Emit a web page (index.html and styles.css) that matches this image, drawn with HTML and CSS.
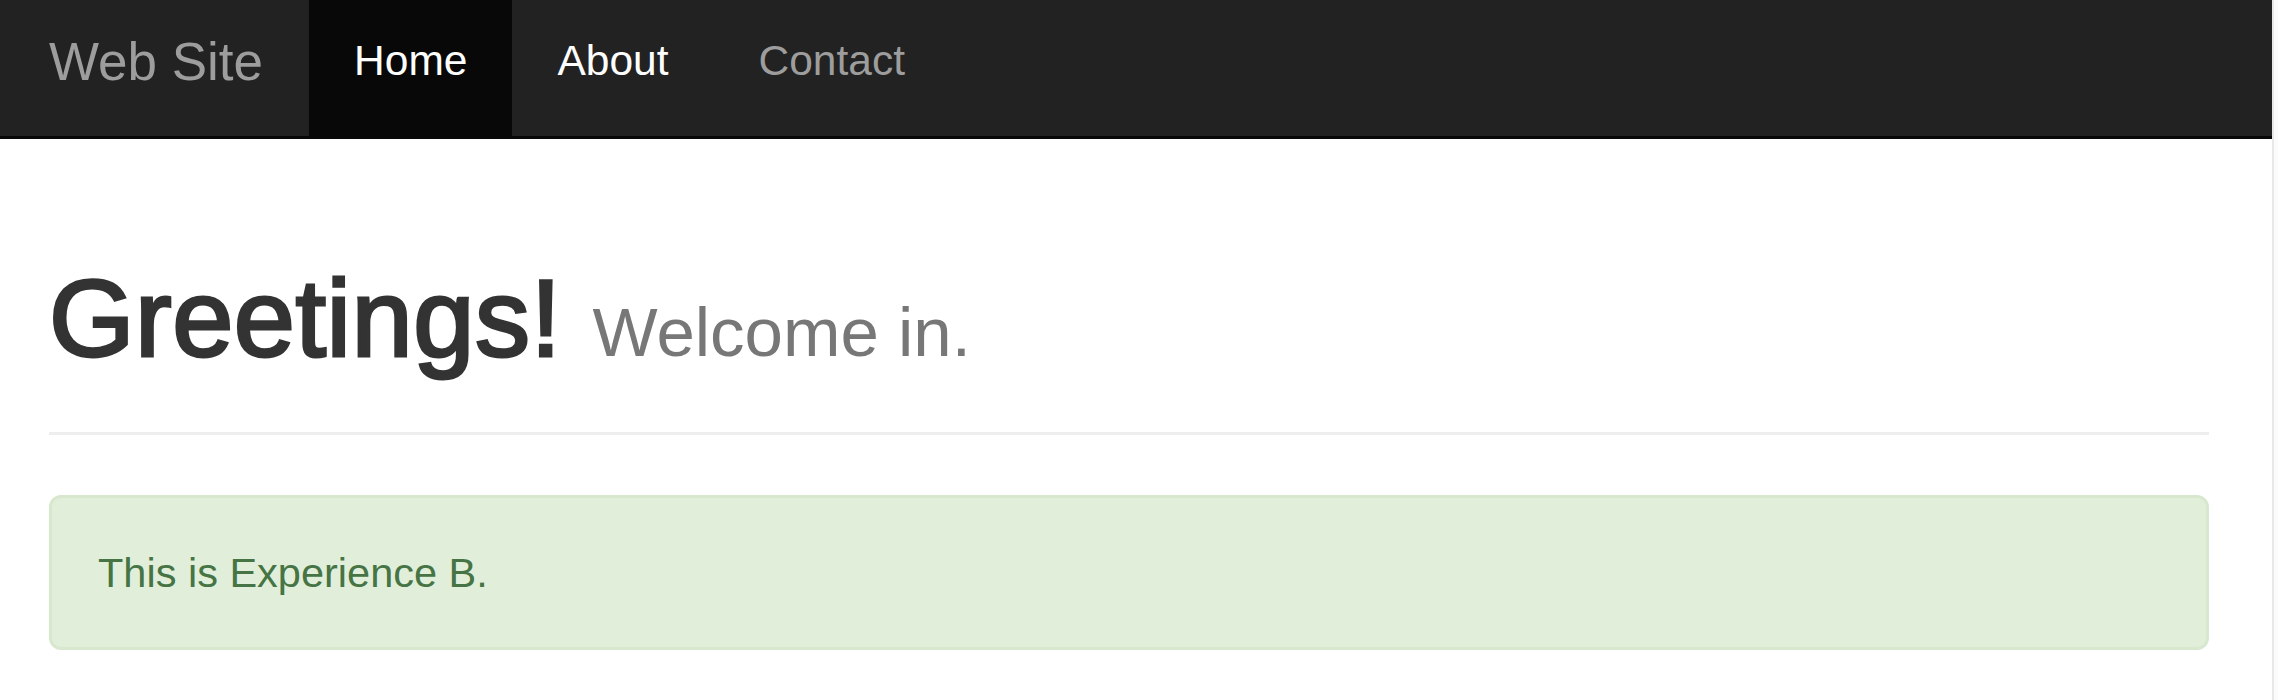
FILE: index.html
```html
<!DOCTYPE html>
<html lang="en">
<head>
<meta charset="utf-8">
<title>Web Site</title>
<link rel="stylesheet" href="styles.css">
</head>
<body>
  <div class="page">
    <nav class="navbar">
      <a class="brand" href="#">Web Site</a>
      <ul class="nav">
        <li class="nav-item active"><a href="#">Home</a></li>
        <li class="nav-item light"><a href="#">About</a></li>
        <li class="nav-item"><a href="#">Contact</a></li>
      </ul>
    </nav>
    <main class="content">
      <div class="page-header">
        <h1 class="title">Greetings! <small class="subtitle">Welcome in.</small></h1>
      </div>
      <div class="alert">This is Experience B.</div>
    </main>
  </div>
  <div class="scrollbar"></div>
</body>
</html>
```

FILE: styles.css
```css
html, body {
  margin: 0;
  padding: 0;
  background: #fff;
}

body {
  display: flex;
  min-height: 100vh;
  font-family: "Liberation Sans", Arial, Helvetica, sans-serif;
}

.page {
  flex: 1;
  min-width: 0;
}

.scrollbar {
  width: 4px;
  border-left: 2px solid #e8e8e8;
  background: #fbfbfb;
}

.navbar {
  display: flex;
  height: 136px;
  background: #222;
  border-bottom: 3px solid #080808;
}

.brand {
  display: block;
  box-sizing: border-box;
  height: 136px;
  padding: 32px 46px 0 49px;
  font-size: 53px;
  line-height: 60px;
  color: #9d9d9d;
  text-decoration: none;
}

.nav {
  display: flex;
  margin: 0;
  padding: 0;
  list-style: none;
}

.nav-item a {
  display: block;
  box-sizing: border-box;
  height: 136px;
  padding: 37px 45px 0 45px;
  font-size: 42.5px;
  line-height: 48px;
  color: #9d9d9d;
  text-decoration: none;
}

.nav-item.active a {
  background: #080808;
  color: #fff;
}

.nav-item.light a {
  color: #fff;
}

.content {
  width: 2160px;
  margin-left: 49px;
  padding-top: 119px;
}

.page-header {
  padding-bottom: 54px;
  border-bottom: 3px solid #eee;
  margin-bottom: 60px;
}

.title {
  margin: 0;
  font-size: 110px;
  line-height: 120px;
  letter-spacing: 0.5px;
  font-weight: normal;
  color: #333;
  -webkit-text-stroke: 3px #333;
}

.subtitle {
  font-size: 69px;
  line-height: 1;
  letter-spacing: 0;
  font-weight: normal;
  color: #777;
  -webkit-text-stroke: 0;
}

.alert {
  padding: 46px 46px 45px 46px;
  border: 3px solid #d8e8ce;
  border-radius: 12px;
  background: #e1efda;
  color: #467444;
  font-size: 41.5px;
  line-height: 58px;
}
```
